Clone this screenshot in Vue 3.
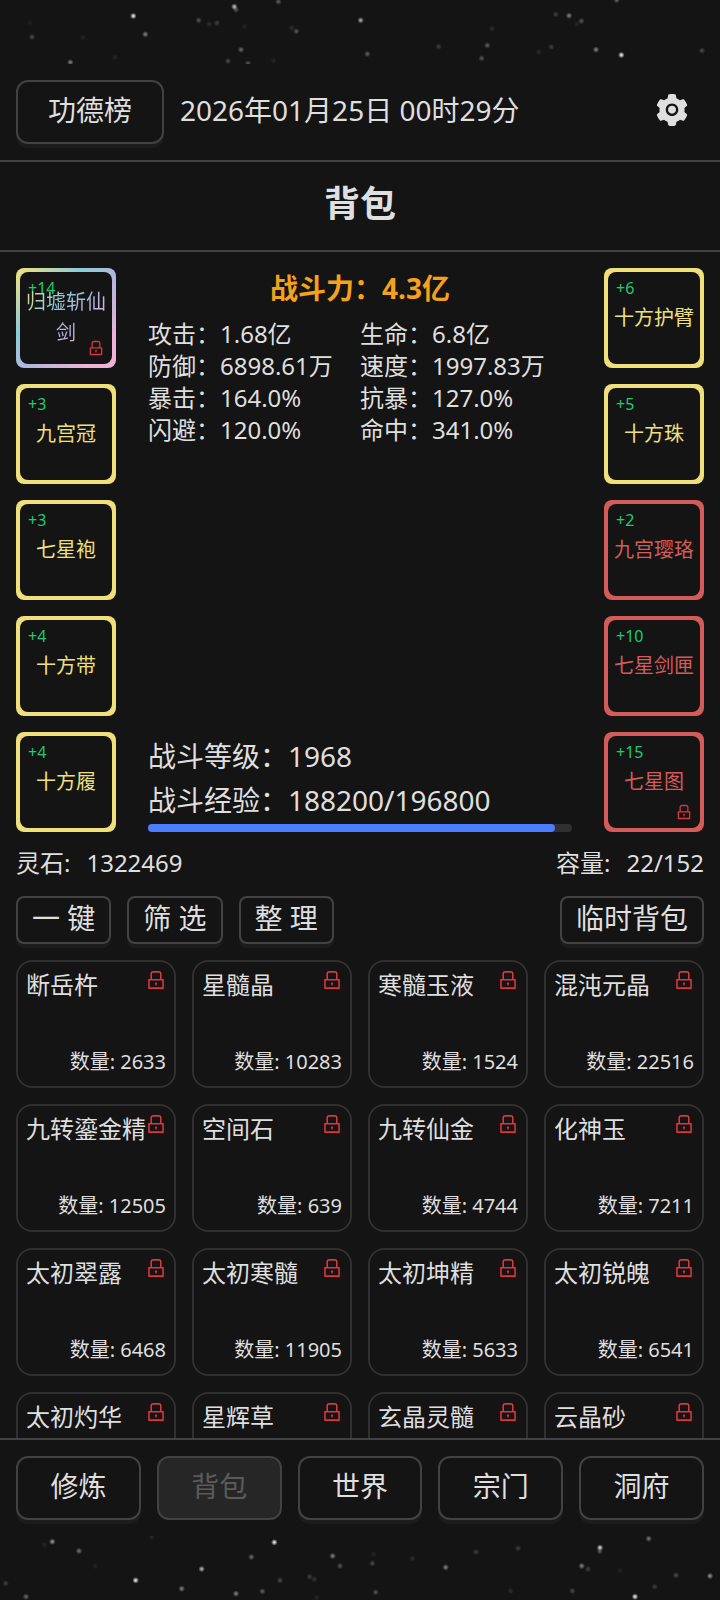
<script setup>
const leftGear = [
  { name: '归墟斩仙剑', level: 14, tone: 'prism', locked: true },
  { name: '九宫冠', level: 3, tone: 'gold' },
  { name: '七星袍', level: 3, tone: 'gold' },
  { name: '十方带', level: 4, tone: 'gold' },
  { name: '十方履', level: 4, tone: 'gold' },
]
const rightGear = [
  { name: '十方护臂', level: 6, tone: 'gold' },
  { name: '十方珠', level: 5, tone: 'gold' },
  { name: '九宫璎珞', level: 2, tone: 'crimson' },
  { name: '七星剑匣', level: 10, tone: 'crimson' },
  { name: '七星图', level: 15, tone: 'crimson', locked: true },
]
const gearColumns = [leftGear, rightGear]

const stats = [
  ['攻击', '1.68亿'], ['生命', '6.8亿'],
  ['防御', '6898.61万'], ['速度', '1997.83万'],
  ['暴击', '164.0%'], ['抗暴', '127.0%'],
  ['闪避', '120.0%'], ['命中', '341.0%'],
]

const expPercent = 96

const items = [
  ['断岳杵', 2633], ['星髓晶', 10283], ['寒髓玉液', 1524], ['混沌元晶', 22516],
  ['九转鎏金精', 12505], ['空间石', 639], ['九转仙金', 4744], ['化神玉', 7211],
  ['太初翠露', 6468], ['太初寒髓', 11905], ['太初坤精', 5633], ['太初锐魄', 6541],
  ['太初灼华'], ['星辉草'], ['玄晶灵髓'], ['云晶砂'],
]

const tabs = ['修炼', '背包', '世界', '宗门', '洞府']
const current = '背包'

// Each star: x, y, brightness
const topStars = [
  [400, 48, 1], [436, 103, 0.5], [211, 187, 0.5], [96, 111, 0.25], [596, 61, 0.3], [651, 69, 0.2],
  [627, 72, 0.12], [703, 20, 0.8], [708, 29, 0.3], [835, 5, 0.35], [723, 149, 0.4], [684, 183, 0.25],
  [744, 190, 0.3], [889, 94, 0.3], [875, 84, 0.12], [733, 80, 0.08], [345, 172, 0.08], [249, 113, 0.08],
  [821, 181, 0.08], [90, 69, 0.06], [1082, 61, 0.7], [1102, 162, 0.35], [1316, 140, 0.2], [1462, 136, 0.35],
  [1445, 175, 0.3], [1476, 86, 0.12], [1667, 43, 0.2], [1707, 47, 0.5], [1744, 63, 0.3], [1850, 0, 0.4],
  [1788, 149, 0.5], [1864, 165, 1], [1654, 141, 0.2], [1616, 156, 0.1], [2106, 152, 0.25], [1730, 72, 0.08],
]
const bottomStars = [
  [157, 17, 0.6], [237, 45, 0.45], [133, 26, 0.08], [285, 90, 0.08], [455, 3, 0.1], [823, 19, 1],
  [754, 63, 0.4], [605, 99, 0.75], [407, 133, 1], [545, 158, 0.5], [708, 173, 0.5], [787, 166, 0.35],
  [840, 133, 0.25], [998, 60, 0.5], [1020, 90, 0.3], [929, 122, 0.2], [943, 130, 0.15], [78, 182, 0.4],
  [17, 142, 0.2], [950, 185, 0.08], [1117, 82, 0.25], [1121, 55, 0.08], [1237, 68, 0.12], [1337, 94, 0.5],
  [1428, 48, 0.2], [1554, 37, 0.2], [1127, 169, 0.3], [1532, 165, 0.12], [1717, 165, 0.25], [1745, 90, 0.5],
  [1764, 99, 0.2], [1800, 35, 0.9], [1799, 46, 0.3], [1860, 104, 0.08], [1946, 8, 0.45], [1964, 152, 0.2],
  [2028, 118, 0.25], [2130, 120, 0.6], [1905, 182, 1],
]

const lockPath = 'M832 464h-68V240c0-70.7-57.3-128-128-128H388c-70.7 0-128 57.3-128 128v224h-68c-17.7 0-32 14.3-32 32v384c0 17.7 14.3 32 32 32h640c17.7 0 32-14.3 32-32V496c0-17.7-14.3-32-32-32zM332 240c0-30.9 25.1-56 56-56h248c30.9 0 56 25.1 56 56v224H332V240zm460 600H232V536h560v304zM484 701v53c0 4.4 3.6 8 8 8h40c4.4 0 8-3.6 8-8v-53a48.01 48.01 0 10-56 0z'
</script>

<template>
  <div class="page">
    <svg class="stars" viewBox="0 0 2160 192" aria-hidden="true">
      <defs>
        <radialGradient id="glow">
          <stop offset="0" stop-color="#fff" />
          <stop offset="0.3" stop-color="#fff" stop-opacity="0.7" />
          <stop offset="1" stop-color="#fff" stop-opacity="0" />
        </radialGradient>
      </defs>
      <circle v-for="([x, y, b], i) in topStars" :key="i" :cx="x" :cy="y" r="10" :opacity="b" fill="url(#glow)" />
    </svg>

    <header class="topbar">
      <button class="btn large rank" type="button">功德榜</button>
      <time class="clock">2026年01月25日 00时29分</time>
      <button class="settings" type="button" aria-label="设置">
        <svg viewBox="64 64 896 896" fill="currentColor" aria-hidden="true">
          <path d="M512.5 390.6c-29.9 0-57.9 11.6-79.1 32.8-21.1 21.2-32.8 49.2-32.8 79.1 0 29.9 11.7 57.9 32.8 79.1 21.2 21.1 49.2 32.8 79.1 32.8 29.9 0 57.9-11.7 79.1-32.8 21.1-21.2 32.8-49.2 32.8-79.1 0-29.9-11.7-57.9-32.8-79.1a110.96 110.96 0 00-79.1-32.8zm412.3 235.5l-65.4-55.9c3.1-19 4.7-38.4 4.7-57.7s-1.6-38.8-4.7-57.7l65.4-55.9a32.03 32.03 0 009.3-35.2l-.9-2.6a442.5 442.5 0 00-79.6-137.7l-1.8-2.1a32.12 32.12 0 00-35.1-9.5l-81.2 28.9c-30-24.6-63.4-44-99.6-57.5l-15.7-84.9a32.05 32.05 0 00-25.8-25.7l-2.7-.5c-52-9.4-106.8-9.4-158.8 0l-2.7.5a32.05 32.05 0 00-25.8 25.7l-15.8 85.3a353.44 353.44 0 00-98.9 57.3l-81.8-29.1a32 32 0 00-35.1 9.5l-1.8 2.1a445.93 445.93 0 00-79.6 137.7l-.9 2.6c-4.5 12.5-.8 26.5 9.3 35.2l66.2 56.5c-3.1 18.8-4.6 38-4.6 57 0 19.2 1.5 38.4 4.6 57l-66 56.5a32.03 32.03 0 00-9.3 35.2l.9 2.6c18.1 50.3 44.8 96.8 79.6 137.7l1.8 2.1a32.12 32.12 0 0035.1 9.5l81.8-29.1c29.8 24.5 63 43.9 98.9 57.3l15.8 85.3a32.05 32.05 0 0025.8 25.7l2.7.5a448.27 448.27 0 00158.8 0l2.7-.5a32.05 32.05 0 0025.8-25.7l15.7-84.9c36.2-13.6 69.6-32.9 99.6-57.5l81.2 28.9a32 32 0 0035.1-9.5l1.8-2.1c34.8-41.1 61.5-87.4 79.6-137.7l.9-2.6c4.3-12.4.6-26.3-9.5-35zm-412.3 52.2c-97.1 0-175.8-78.7-175.8-175.8s78.7-175.8 175.8-175.8 175.8 78.7 175.8 175.8-78.7 175.8-175.8 175.8z" />
        </svg>
      </button>
    </header>

    <h1 class="title">背包</h1>

    <main class="content">
      <section class="loadout">
        <div v-for="(column, c) in gearColumns" :key="c" class="gear-column" :class="{ last: c === 1 }">
          <div v-for="gear in column" :key="gear.name" class="slot" :class="gear.tone">
            <div class="slot-inner">
              <span class="level">+{{ gear.level }}</span>
              <span class="gear-name">{{ gear.name }}</span>
              <svg v-if="gear.locked" class="lock slot-lock" viewBox="64 64 896 896" aria-hidden="true"><path :d="lockPath" /></svg>
            </div>
          </div>
        </div>

        <div class="summary">
          <div class="power">战斗力：4.3亿</div>
          <div class="stats">
            <div v-for="[label, value] in stats" :key="label">{{ label }}：{{ value }}</div>
          </div>
          <div class="progress">
            <div>战斗等级：1968</div>
            <div>战斗经验：188200/196800</div>
            <div class="bar"><div class="bar-fill" :style="{ width: expPercent + '%' }"></div></div>
          </div>
        </div>
      </section>

      <div class="info">
        <div class="pair"><span>灵石:</span><span>1322469</span></div>
        <div class="pair"><span>容量:</span><span>22/152</span></div>
      </div>

      <div class="actions">
        <button class="btn" type="button">一 键</button>
        <button class="btn" type="button">筛 选</button>
        <button class="btn" type="button">整 理</button>
        <button class="btn temp" type="button">临时背包</button>
      </div>

      <ul class="items">
        <li v-for="[name, count] in items" :key="name" class="item">
          <span class="item-name">{{ name }}</span>
          <span v-if="count" class="count">数量: {{ count }}</span>
          <svg class="lock item-lock" viewBox="64 64 896 896" aria-hidden="true"><path :d="lockPath" /></svg>
        </li>
      </ul>
    </main>

    <nav class="tabs">
      <button v-for="tab in tabs" :key="tab" class="btn large" type="button" :disabled="tab === current">{{ tab }}</button>
    </nav>

    <svg class="stars" viewBox="0 0 2160 192" aria-hidden="true">
      <circle v-for="([x, y, b], i) in bottomStars" :key="i" :cx="x" :cy="y" r="10" :opacity="b" fill="url(#glow)" />
    </svg>
  </div>
</template>

<style>
body {
  background: #141414;
}
</style>

<style scoped>
.page {
  box-sizing: border-box;
  display: flex;
  flex-direction: column;
  height: 100vh;
  overflow: hidden;
  background: #141414;
  color: #dfdfdf;
  font-family: "Noto Sans", "Noto Sans CJK SC", sans-serif;
  font-size: 28px;
}
.page * {
  box-sizing: border-box;
}
.stars {
  display: block;
  width: 100%;
  flex: none;
}
.btn {
  height: 48px;
  padding: 0 14px 4px;
  border: 2px solid #424242;
  border-radius: 8px;
  background: #141414;
  box-shadow: 0 4px 0 #1c1c1c;
  color: inherit;
  font: inherit;
  line-height: 40px;
  white-space: nowrap;
}
.btn.large {
  height: 64px;
  border-radius: 12px;
}
.btn:disabled {
  background: #262626;
  box-shadow: none;
  color: #5a5a5a;
}
.topbar {
  display: flex;
  align-items: center;
  gap: 16px;
  padding: 16px;
  border-bottom: 2px solid #424242;
}
.topbar .rank {
  padding: 0 30px 4px;
}
.clock {
  padding-bottom: 4px;
  line-height: 40px;
}
.settings {
  display: flex;
  margin-left: auto;
  padding: 14px 16px 18px;
  border: 0;
  background: none;
  color: inherit;
}
.settings svg {
  width: 32px;
  height: 32px;
}
.title {
  margin: 0;
  padding: 14px 16px 18px;
  border-bottom: 2px solid #424242;
  font-size: 36px;
  font-weight: 700;
  line-height: 56px;
  text-align: center;
}
.content {
  display: flex;
  flex: 1;
  flex-direction: column;
  min-height: 0;
  padding: 16px 16px 0;
  overflow: hidden;
}
.loadout {
  display: flex;
  flex: none;
}
.gear-column {
  display: flex;
  flex-direction: column;
  gap: 16px;
}
.gear-column.last {
  order: 2;
}
.slot {
  display: flex;
  width: 100px;
  height: 100px;
  padding: 4px;
  border-radius: 8px;
  background: var(--tone);
}
.gold {
  --tone: #f0e07c;
  color: #f0e07c;
}
.crimson {
  --tone: #d35c58;
  color: #d35c58;
}
.prism {
  --tone: linear-gradient(135deg, #f5e27a 0%, #8ccbd9 33%, #b3b6e0 55%, #f0b2d6 85%);
}
.slot-inner {
  position: relative;
  display: flex;
  flex: 1;
  align-items: center;
  justify-content: center;
  border-radius: 8px;
  background: #141414;
}
.level {
  position: absolute;
  top: 4px;
  left: 8px;
  color: #1ccc72;
  font-size: 16px;
  line-height: 24px;
}
.gear-name {
  position: relative;
  padding-bottom: 2px;
  font-size: 20px;
  line-height: 31px;
  text-align: center;
}
.prism .gear-name {
  background: var(--tone);
  background-clip: text;
  -webkit-background-clip: text;
  color: transparent;
}
.lock {
  position: absolute;
  fill: #d9363e;
}
.slot-lock {
  right: 8px;
  bottom: 8px;
  width: 16px;
  height: 16px;
}
.summary {
  display: flex;
  flex: 1;
  flex-direction: column;
  padding: 0 32px;
}
.power {
  margin-bottom: 10px;
  color: #f5a11a;
  font-weight: 700;
  line-height: 40px;
  text-align: center;
}
.stats {
  display: grid;
  grid-template-columns: 1fr 1fr;
  font-size: 24px;
  line-height: 32px;
  white-space: nowrap;
}
.progress {
  margin-top: auto;
  line-height: 44px;
}
.bar {
  height: 8px;
  margin-top: 2px;
  border-radius: 4px;
  background: #303030;
}
.bar-fill {
  height: 100%;
  border-radius: 4px;
  background: #4a7dff;
}
.info {
  display: flex;
  flex: none;
  justify-content: space-between;
  padding-bottom: 2px;
  font-size: 24px;
  line-height: 62px;
}
.pair {
  display: flex;
  gap: 16px;
}
.actions {
  display: flex;
  flex: none;
  gap: 16px;
}
.temp {
  margin-left: auto;
}
.items {
  display: grid;
  grid-template-columns: repeat(4, 1fr);
  gap: 16px;
  margin: 16px 0 0;
  padding: 0;
  list-style: none;
}
.item {
  position: relative;
  display: flex;
  flex-direction: column;
  justify-content: space-between;
  height: 128px;
  padding: 8px;
  border: 2px solid #303030;
  border-radius: 16px;
}
.item-name {
  font-size: 24px;
  line-height: 30px;
  white-space: nowrap;
}
.count {
  font-size: 20px;
  line-height: 32px;
  text-align: right;
}
.item-lock {
  top: 8px;
  right: 8px;
  width: 20px;
  height: 20px;
}
.tabs {
  display: flex;
  flex: none;
  gap: 16px;
  padding: 16px;
  border-top: 2px solid #424242;
}
.tabs .btn {
  flex: 1;
}
</style>
